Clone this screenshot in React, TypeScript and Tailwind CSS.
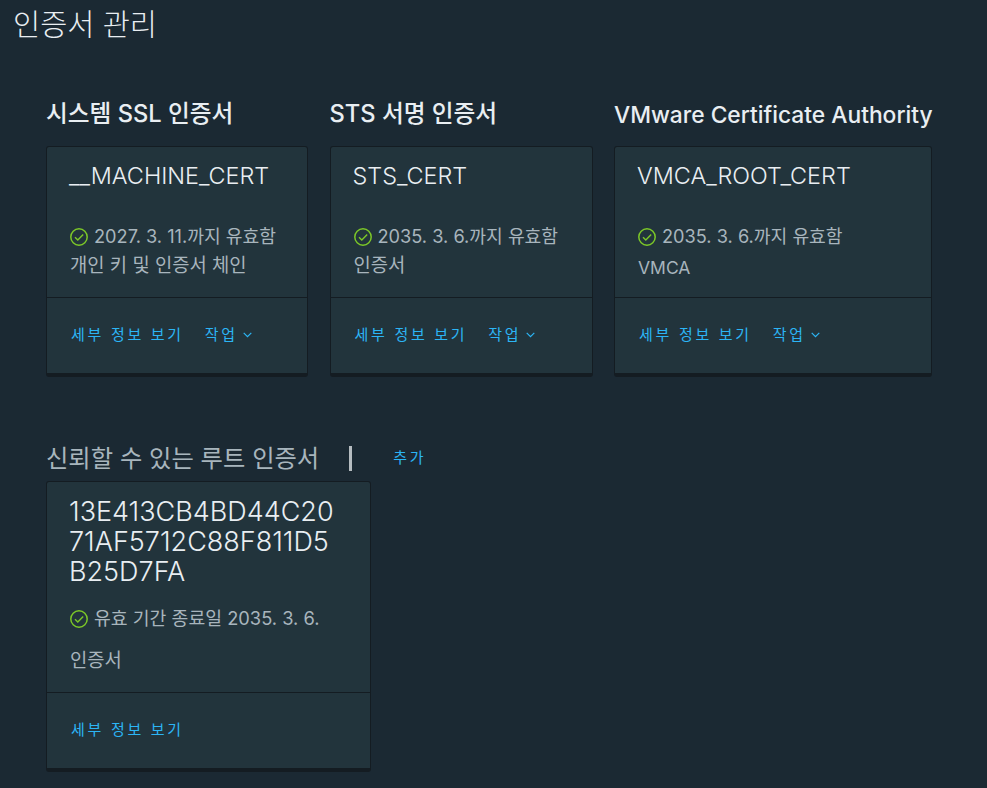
const SANS = 'font-["Inter","Noto_Sans_CJK_KR",sans-serif]';

type Cert = {
  heading: string;
  headingClass: string;
  name: string;
  valid: string;
  kind: string;
  kindClass: string;
  width: string;
};

const CERTS: Cert[] = [
  { heading: '시스템 SSL 인증서', headingClass: 'text-[23.7px] leading-[32px]', name: '__MACHINE_CERT', valid: '2027. 3. 11.까지 유효함', kind: '개인 키 및 인증서 체인', kindClass: 'mt-[1px] text-[18.8px]', width: 'w-[262px]' },
  { heading: 'STS 서명 인증서', headingClass: 'text-[23.7px] leading-[32px]', name: 'STS_CERT', valid: '2035. 3. 6.까지 유효함', kind: '인증서', kindClass: 'mt-[1px] text-[18.8px]', width: 'w-[263px]' },
  { heading: 'VMware Certificate Authority', headingClass: 'text-[22.8px] leading-[34px]', name: 'VMCA_ROOT_CERT', valid: '2035. 3. 6.까지 유효함', kind: 'VMCA', kindClass: 'mt-[3px] text-[17.5px]', width: 'w-[318px]' },
];

function CheckIcon() {
  return (
    <svg width="18" height="18" viewBox="0 0 18 18" fill="none" className="ml-[1px] shrink-0">
      <circle cx="9" cy="9" r="8.2" stroke="#7cc728" strokeWidth="1.5" />
      <path d="M5 9.3l2.8 2.8L13.2 6.4" stroke="#7cc728" strokeWidth="1.4" />
    </svg>
  );
}

function Chevron() {
  return (
    <svg width="9" height="6" viewBox="0 0 9 6" fill="none">
      <path d="M0.7 0.8L4.5 4.6L8.3 0.8" stroke="#2cb5f5" strokeWidth="1.2" />
    </svg>
  );
}

function CertCard({ cert }: { cert: Cert }) {
  return (
    <div className={cert.width}>
      <h3 className={`h-[32px] ${cert.headingClass} font-medium whitespace-nowrap text-[#e9eef2]`}>{cert.heading}</h3>
      <div className="mt-[16px] h-[231px] rounded-[3px] border border-[#141c22] border-b-[4px] bg-[#22343c]">
        <div className="h-[150px] pl-[22px]">
          <p className="pt-[15px] text-[23.4px] leading-[28px] font-light text-[#e9eef2]">{cert.name}</p>
          <div className="mt-[33px] flex h-[28px] items-center gap-[6px] text-[18.2px] text-[#a8b5bd]">
            <CheckIcon />
            <span className="whitespace-nowrap">{cert.valid}</span>
          </div>
          <p className={`ml-[1px] ${cert.kindClass} leading-[28px] text-[#a8b5bd]`}>{cert.kind}</p>
        </div>
        <div className="flex h-[75px] items-center border-t border-[#141c22] pl-[24px] text-[15px] tracking-[2.7px] text-[#2cb5f5]">
          <span>세부 정보 보기</span>
          <span className="ml-[21px]">작업</span>
          <span className="ml-[5px] flex">
            <Chevron />
          </span>
        </div>
      </div>
    </div>
  );
}

export default function App() {
  return (
    <div className={`${SANS} h-[788px] w-[987px] overflow-hidden bg-[#1b2933] pl-[46px]`}>
      <h1 className="-ml-[33px] pt-[4px] text-[29.5px] leading-[40px] font-light text-[#e9eef2]">인증서 관리</h1>
      <div className="mt-[54px] flex gap-[21.5px]">
        {CERTS.map((cert) => (
          <CertCard key={cert.name} cert={cert} />
        ))}
      </div>
      <div className="mt-[62px] flex h-[38px] items-center">
        <h3 className="text-[24.3px] text-[#a8b5bd]">신뢰할 수 있는 루트 인증서</h3>
        <span className="ml-[30px] h-[25px] w-[3px] bg-[#b5bcc0]" />
        <span className="ml-[41px] text-[15px] tracking-[2.7px] text-[#2cb5f5]">추가</span>
      </div>
      <div className="mt-[4px] h-[291px] w-[325px] rounded-[3px] border border-[#141c22] border-b-[4px] bg-[#22343c]">
        <div className="h-[210px] pl-[22px]">
          <p className="w-[270px] pt-[15px] text-[27px] leading-[30px] font-light break-all text-[#e9eef2]">13E413CB4BD44C2071AF5712C88F811D5B25D7FA</p>
          <div className="mt-[18px] flex h-[28px] items-center gap-[6px] text-[18.3px] text-[#a8b5bd]">
            <CheckIcon />
            <span>유효 기간 종료일 2035. 3. 6.</span>
          </div>
          <p className="mt-[14px] ml-[1px] text-[18.8px] leading-[28px] text-[#a8b5bd]">인증서</p>
        </div>
        <div className="flex h-[75px] items-center border-t border-[#141c22] pl-[24px] text-[15px] tracking-[2.7px] text-[#2cb5f5]">
          세부 정보 보기
        </div>
      </div>
    </div>
  );
}
